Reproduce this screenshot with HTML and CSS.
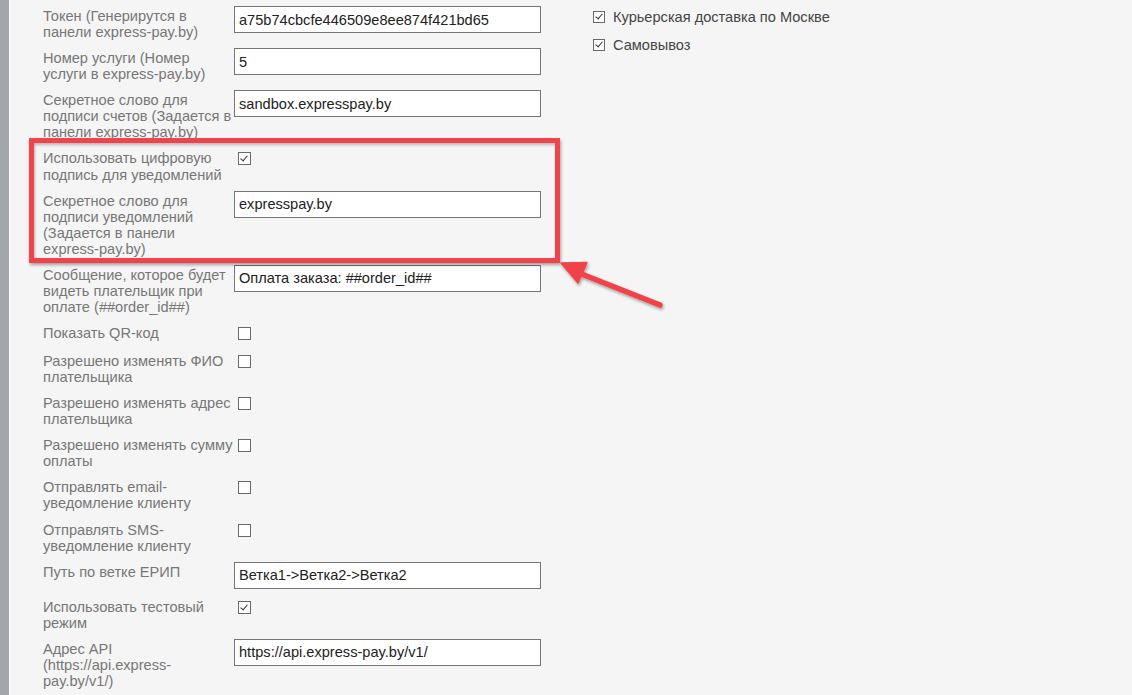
FILE: index.html
```html
<!DOCTYPE html>
<html lang="ru">
<head>
<meta charset="utf-8">
<title>express-pay</title>
<link rel="stylesheet" href="styles.css">
</head>
<body>
<div class="page">
  <div class="sidebar"></div>
  <div class="content">
    <form class="form">
      <div class="row"><label class="label">Токен (Генерирутся в панели express-pay.by)</label><input class="field" type="text" value="a75b74cbcfe446509e8ee874f421bd65"></div>
      <div class="row"><label class="label">Номер услуги (Номер услуги в express-pay.by)</label><input class="field" type="text" value="5"></div>
      <div class="row"><label class="label">Секретное слово для подписи счетов (Задается в панели express-pay.by)</label><input class="field" type="text" value="sandbox.expresspay.by"></div>
      <div class="row"><label class="label">Использовать цифровую подпись для уведомлений</label><input class="check" type="checkbox" checked></div>
      <div class="row"><label class="label">Секретное слово для подписи уведомлений (Задается в панели <span class="nowrap">express-pay.by)</span></label><input class="field" type="text" value="expresspay.by"></div>
      <div class="row"><label class="label">Сообщение, которое будет видеть плательщик при оплате (##order_id##)</label><input class="field" type="text" value="Оплата заказа: ##order_id##"></div>
      <div class="row"><label class="label">Показать QR-код</label><input class="check" type="checkbox"></div>
      <div class="row"><label class="label">Разрешено изменять ФИО плательщика</label><input class="check" type="checkbox"></div>
      <div class="row"><label class="label">Разрешено изменять адрес плательщика</label><input class="check" type="checkbox"></div>
      <div class="row"><label class="label">Разрешено изменять сумму оплаты</label><input class="check" type="checkbox"></div>
      <div class="row"><label class="label">Отправлять email-уведомление клиенту</label><input class="check" type="checkbox"></div>
      <div class="row"><label class="label">Отправлять SMS-уведомление клиенту</label><input class="check" type="checkbox"></div>
      <div class="row"><label class="label">Путь по ветке ЕРИП</label><input class="field" type="text" value="Ветка1-&gt;Ветка2-&gt;Ветка2"></div>
      <div class="row"><label class="label">Использовать тестовый режим</label><input class="check" type="checkbox" checked></div>
      <div class="row"><label class="label">Адрес API (https://api.express-pay.by/v1/)</label><input class="field" type="text" value="https://api.express-pay.by/v1/"></div>
    </form>
    <div class="shipping">
      <label class="option"><input class="check" type="checkbox" checked><span>Курьерская доставка по Москве</span></label>
      <label class="option"><input class="check" type="checkbox" checked><span>Самовывоз</span></label>
    </div>
  </div>
</div>
<div class="highlight"></div>
<svg class="arrow" width="1132" height="695" viewBox="0 0 1132 695" aria-hidden="true">
  <defs>
    <filter id="sh" x="-20%" y="-20%" width="140%" height="140%">
      <feDropShadow dx="1" dy="2" stdDeviation="1.5" flood-color="#000" flood-opacity="0.35"/>
    </filter>
  </defs>
  <g filter="url(#sh)" fill="#f2434a" stroke="#f2434a">
    <line x1="574" y1="271" x2="660" y2="305" stroke-width="5.5" stroke-linecap="round"/>
    <polygon points="561,263 587,262.5 578,283" stroke-width="1.5" stroke-linejoin="round"/>
  </g>
</svg>
</body>
</html>
```
FILE: styles.css
```css
html, body {
  margin: 0;
  padding: 0;
}
body {
  background: #f5f5f5;
  font-family: "Liberation Sans", Arial, sans-serif;
  font-size: 14.6px;
  overflow: hidden;
}
.page {
  display: flex;
  min-height: 695px;
}
.sidebar {
  width: 9px;
  background: #a3a6ab;
  border-right: 1px solid #fcfcfc;
  flex: none;
}
.content {
  display: flex;
  padding-left: 33px;
  padding-top: 2px;
  gap: 48px;
}
.form {
  display: flex;
  flex-direction: column;
  width: 498px;
  margin: 0;
}
.row {
  display: flex;
  align-items: flex-start;
  padding: 4px 0;
}
.label {
  width: 191px;
  padding-top: 2px;
  line-height: 16.07px;
  color: #777;
  flex: none;
}
.nowrap {
  white-space: nowrap;
}
.field {
  box-sizing: border-box;
  width: 307px;
  height: 27px;
  margin: 0;
  padding: 0 4px;
  border: 1px solid #767676;
  background: #fff;
  font-family: "Liberation Sans", Arial, sans-serif;
  font-size: 14.6px;
  color: #222;
  outline: none;
}
.check {
  appearance: none;
  -webkit-appearance: none;
  box-sizing: border-box;
  width: 13px;
  height: 13px;
  margin: 4px 3px 3px 4px;
  border: 1px solid #6a6a6a;
  background: #fff;
  position: relative;
  flex: none;
}
.check:checked::after {
  content: "";
  position: absolute;
  left: 3px;
  top: 1px;
  width: 3px;
  height: 6px;
  border-right: 1.3px solid #333;
  border-bottom: 1.3px solid #333;
  transform: rotate(40deg);
}
.shipping {
  display: flex;
  flex-direction: column;
  padding-top: 1px;
}
.option {
  display: flex;
  align-items: center;
  height: 28px;
  color: #444;
}
.option .check {
  margin: 0 8px 0 4px;
  width: 12px;
  height: 12px;
}
.option .check:checked::after {
  left: 3px;
  top: 0px;
}
.highlight {
  position: absolute;
  left: 29px;
  top: 138px;
  width: 531px;
  height: 125px;
  box-sizing: border-box;
  border: 5px solid #f2434a;
  box-shadow: 1px 2px 3px rgba(0, 0, 0, 0.35), inset 1px 2px 3px rgba(0, 0, 0, 0.25);
  pointer-events: none;
}
.arrow {
  position: absolute;
  left: 0;
  top: 0;
  pointer-events: none;
}
```
